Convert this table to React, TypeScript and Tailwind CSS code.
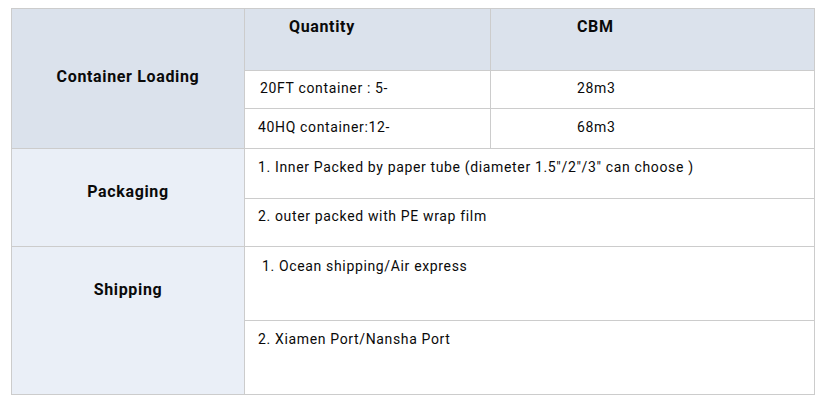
export default function App() {
  const label = "bg-[#eaeff7] border-r border-b border-[#cccccc] text-center font-bold text-[16px] leading-5 tracking-[0.65px]"
  const cell = "border-r border-b border-[#cccccc] text-[14px] leading-5 tracking-[0.65px] bg-white"
  const head = "bg-[#dbe2ec] border-r border-b border-[#cccccc] font-bold text-[16px] leading-5 tracking-[0.65px]"

  return (
    <div className="w-[827px] h-[403px] bg-white pt-[8px] pl-[11px] text-[#0a0a0a] [font-family:Roboto,'Liberation_Sans',sans-serif]">
      <div className="grid w-[804px] grid-cols-[233px_246px_324px] grid-rows-[62px_38px_40px_50px_48px_74px_74px] border-l border-t border-[#cccccc]">
        {/* Container loading */}
        <div className={`${head} row-span-3 text-center pt-[58px]`}>Container Loading</div>
        <div className={`${head} pt-[8px] pl-[44px]`}>Quantity</div>
        <div className={`${head} pt-[8px] pl-[86px]`}>CBM</div>
        <div className={`${cell} pt-[7px] pl-[15px]`}>20FT container : 5-</div>
        <div className={`${cell} pt-[7px] pl-[86px]`}>28m3</div>
        <div className={`${cell} pt-[8px] pl-[13px]`}>40HQ container:12-</div>
        <div className={`${cell} pt-[8px] pl-[86px]`}>68m3</div>

        {/* Packaging */}
        <div className={`${label} row-span-2 pt-[33px]`}>Packaging</div>
        <div className={`${cell} col-span-2 pt-[8px] pl-[13px]`}>
          1. Inner Packed by paper tube (diameter 1.5"/2"/3" can choose )
        </div>
        <div className={`${cell} col-span-2 pt-[7px] pl-[13px]`}>2. outer packed with PE wrap film</div>

        {/* Shipping */}
        <div className={`${label} row-span-2 pt-[33px]`}>Shipping</div>
        <div className={`${cell} col-span-2 pt-[9px] pl-[17px]`}>1. Ocean shipping/Air express</div>
        <div className={`${cell} col-span-2 pt-[8px] pl-[13px]`}>2. Xiamen Port/Nansha Port</div>
      </div>
    </div>
  )
}
